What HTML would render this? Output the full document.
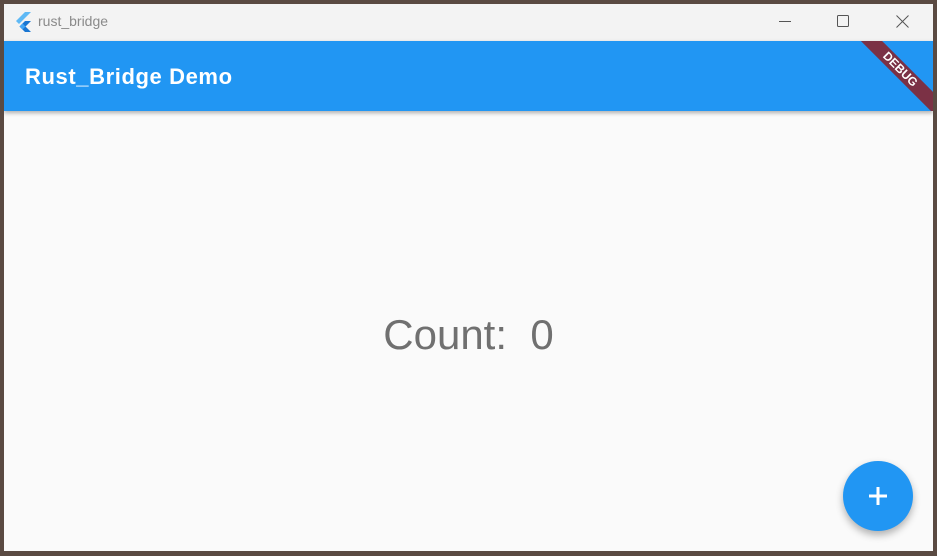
<!DOCTYPE html>
<html><head><meta charset="utf-8"><style>
html,body{margin:0;padding:0;width:937px;height:556px;overflow:hidden;background:#5a4a42;font-family:"Segoe UI","Liberation Sans",sans-serif}
.win{position:absolute;left:4px;top:4px;width:929px;height:547px;background:#fafafa;overflow:hidden}
.title{position:absolute;left:0;top:0;width:929px;height:37px;background:#f3f3f3}
.title .t{position:absolute;left:34px;top:9px;font-size:14px;color:#8a8a8a}
.bar{position:absolute;left:0;top:37px;width:929px;height:70px;background:#2196f3;box-shadow:0 2px 4px rgba(0,0,0,.3)}
.bar .h{position:absolute;left:21px;top:23px;font-size:22px;font-weight:bold;color:#fff;letter-spacing:.6px}
.clip{position:absolute;left:0;top:37px;width:929px;height:70px;overflow:hidden}
.banner{position:absolute;left:836px;top:21px;width:120px;height:15px;background:#7b3145;transform:rotate(45deg);color:#fff;font-size:12px;font-weight:bold;text-align:center;line-height:15px}
.count{position:absolute;left:0;width:929px;top:307px;text-align:center;font-size:42px;color:#707070}
.fab{position:absolute;left:839px;top:457px;width:70px;height:70px;border-radius:50%;background:#2196f3;box-shadow:0 4px 8px rgba(0,0,0,.3)}
</style></head><body>
<div class="win">
<div class="title">
<svg style="position:absolute;left:10px;top:8px" width="18" height="20" viewBox="0 0 18 20"><path d="M11 0h6L5 12 2 9z" fill="#5fb9f5"/><path d="M11 9h6l-5.5 5.5L17 20h-6l-5.5-5.5z" fill="#1976d2"/><path d="M5.5 14.5 8.5 11.5 11.5 14.5 8.5 17.5z" fill="#42a5f5"/></svg>
<div class="t">rust_bridge</div>
<svg style="position:absolute;left:775px;top:17px" width="12" height="2"><rect width="12" height="1" fill="#555"/></svg>
<svg style="position:absolute;left:833px;top:11px" width="12" height="12"><rect x=".5" y=".5" width="11" height="11" rx="1" fill="none" stroke="#555"/></svg>
<svg style="position:absolute;left:892px;top:11px" width="13" height="13"><path d="M.5.5 12.5 12.5M12.5.5.5 12.5" stroke="#555"/></svg>
</div>
<div class="bar"><div class="h">Rust_Bridge Demo</div></div>
<div class="clip"><div class="banner">DEBUG</div></div>
<div class="count">Count:&nbsp; 0</div>
<div class="fab"><svg style="position:absolute;left:25px;top:25px" width="20" height="20"><path d="M10 1v18M1 10h18" stroke="#fff" stroke-width="3"/></svg></div>
</div>
</body></html>
